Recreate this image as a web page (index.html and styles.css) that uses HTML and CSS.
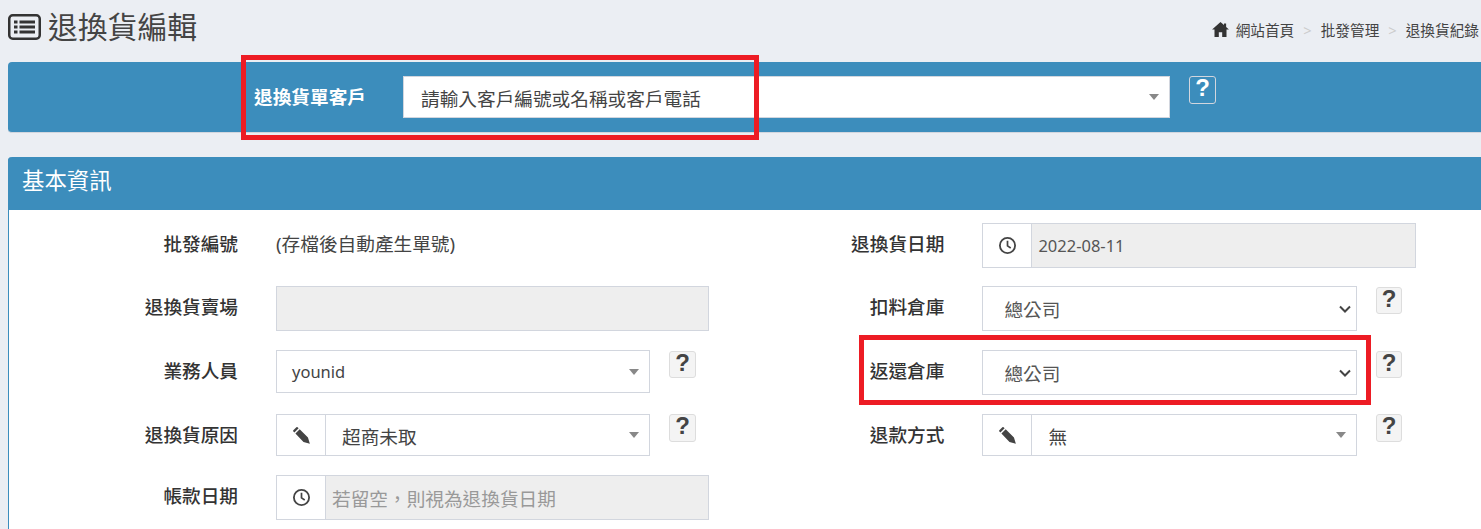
FILE: index.html
```html
<!DOCTYPE html>
<html lang="zh-Hant">
<head>
  <meta charset="UTF-8">
  <title>退換貨編輯</title>
  <link rel="stylesheet" href="styles.css">
</head>
<body>
  <svg class="icon-defs" width="0" height="0">
    <symbol id="ic-clock" viewBox="0 0 20 20">
      <circle cx="10" cy="10" r="8" fill="none" stroke="currentColor" stroke-width="1.9"/>
      <path d="M10 5v5.4l3.4 2.2" fill="none" stroke="currentColor" stroke-width="1.8"/>
    </symbol>
    <symbol id="ic-pencil" viewBox="0 0 20 20">
      <path d="M4.6 1.2 1.4 4.4a1 1 0 0 0 0 1.3l1.1 1.1 4.5-4.5-1.1-1.1a1 1 0 0 0-1.3 0zM3.6 7.9l4.5-4.5 8.7 8.7 2 6.7-6.7-2z" fill="currentColor"/>
    </symbol>
  </svg>

  <header class="page-head">
    <h1 class="page-title">
      <svg class="title-icon" viewBox="0 0 33 26">
        <rect x="1.250" y="1.250" width="30.500" height="23.500" rx="3.500" fill="none" stroke="currentColor" stroke-width="2.500"/>
        <path d="M6 6.500h3.500v3H6zM6 11.500h3.500v3H6zM6 16.500h3.500v3H6zM11.500 6.500H27v3H11.500zM11.500 11.500H27v3H11.500zM11.500 16.500H27v3H11.500z" fill="currentColor"/>
      </svg>
      退換貨編輯
    </h1>
    <nav class="crumbs">
      <svg class="home-icon" viewBox="0 0 18 16"><path d="M9 0 0 8h2.600v8h4.600v-5.200h3.600V16h4.600V8H18l-3-2.700V1.500h-2.300v1.700z" fill="currentColor"/></svg>
      <span class="crumb">網站首頁</span>
      <span class="crumb-sep">&gt;</span>
      <span class="crumb">批發管理</span>
      <span class="crumb-sep">&gt;</span>
      <span class="crumb">退換貨紀錄</span>
    </nav>
  </header>

  <section class="customer-bar">
    <label class="customer-label">退換貨單客戶</label>
    <div class="customer-select">
      <span>請輸入客戶編號或名稱或客戶電話</span>
      <i class="caret"></i>
    </div>
    <button class="help help-dark">?</button>
  </section>

  <section class="panel">
    <h2 class="panel-head">基本資訊</h2>
    <div class="form-grid">
      <div class="row">
        <label class="row-label">批發編號</label>
        <span class="static-text">(存檔後自動產生單號)</span>
      </div>
      <div class="row">
        <label class="row-label">退換貨日期</label>
        <div class="field field-wide field-tall">
          <span class="addon"><svg class="addon-icon"><use href="#ic-clock"/></svg></span>
          <span class="field-body body-latin is-disabled">2022-08-11</span>
        </div>
      </div>

      <div class="row">
        <label class="row-label">退換貨賣場</label>
        <div class="field field-wide field-tall is-disabled"></div>
      </div>
      <div class="row">
        <label class="row-label">扣料倉庫</label>
        <div class="field field-tall">
          <span class="field-body body-native">總公司</span>
          <svg class="chevron" viewBox="0 0 12 8"><path d="M1 1.500l5 5 5-5" fill="none" stroke="currentColor" stroke-width="2"/></svg>
        </div>
        <button class="help">?</button>
      </div>

      <div class="row">
        <label class="row-label">業務人員</label>
        <div class="field field-mid">
          <span class="field-body body-latin">younid</span>
          <i class="caret"></i>
        </div>
        <button class="help">?</button>
      </div>
      <div class="row">
        <label class="row-label">返還倉庫</label>
        <div class="field field-tall">
          <span class="field-body body-native">總公司</span>
          <svg class="chevron" viewBox="0 0 12 8"><path d="M1 1.500l5 5 5-5" fill="none" stroke="currentColor" stroke-width="2"/></svg>
        </div>
        <button class="help">?</button>
      </div>

      <div class="row">
        <label class="row-label">退換貨原因</label>
        <div class="field">
          <span class="addon"><svg class="addon-icon"><use href="#ic-pencil"/></svg></span>
          <span class="field-body">超商未取</span>
          <i class="caret"></i>
        </div>
        <button class="help help-tall">?</button>
      </div>
      <div class="row">
        <label class="row-label">退款方式</label>
        <div class="field">
          <span class="addon"><svg class="addon-icon"><use href="#ic-pencil"/></svg></span>
          <span class="field-body">無</span>
          <i class="caret"></i>
        </div>
        <button class="help help-tall">?</button>
      </div>

      <div class="row">
        <label class="row-label">帳款日期</label>
        <div class="field field-wide field-tall">
          <span class="addon"><svg class="addon-icon"><use href="#ic-clock"/></svg></span>
          <span class="field-body is-disabled placeholder">若留空，則視為退換貨日期</span>
        </div>
      </div>
    </div>
  </section>

  <!-- Red annotation boxes -->
  <div class="mark mark-customer"></div>
  <div class="mark mark-return"></div>
</body>
</html>
```

FILE: styles.css
```css
html, body {
  margin: 0;
  height: 529px;
  overflow: hidden;
}
body {
  position: relative;
  background-color: #ebeef3;
  color: #444;
  font-family: "Noto Sans", "Noto Sans CJK TC", sans-serif;
  font-size: 18.67px;
}
.icon-defs {
  position: absolute;
}
/* Page header */
.page-head {
  display: flex;
  justify-content: space-between;
  height: 62px;
  padding-left: 8px;
  box-sizing: border-box;
}
.page-title {
  display: flex;
  align-items: center;
  gap: 7px;
  height: 53px;
  margin: 0;
  font-size: 29.8px;
  font-weight: 400;
  line-height: 1;
  color: #444;
}
.title-icon {
  width: 33px;
  height: 26px;
  color: #333;
}
.crumbs {
  display: flex;
  align-items: center;
  height: 59px;
  margin-right: 2px;
  font-size: 14.67px;
  color: #444;
  white-space: nowrap;
}
.home-icon {
  width: 17px;
  height: 15px;
  margin-right: 7px;
  color: #333;
}
.crumb-sep {
  margin: 0 9px;
  color: #ccc;
}
/* Customer bar */
.customer-bar {
  display: flex;
  align-items: flex-start;
  height: 71px;
  margin-left: 8px;
  padding-top: 14px;
  box-sizing: border-box;
  background-color: #3c8dbc;
  border-radius: 4px 0 0 4px;
  border-bottom: 1px solid #d2d6de;
}
.customer-label {
  width: 149px;
  margin-left: 246px;
  color: #fff;
  font-size: 18.67px;
  font-weight: 700;
  line-height: 42px;
}
.customer-select {
  display: flex;
  align-items: center;
  justify-content: space-between;
  width: 767px;
  height: 42px;
  padding: 0 10px 0 17px;
  box-sizing: border-box;
  background: #fff;
  border: 1px solid #d2d6de;
}
.help {
  flex: none;
  width: 26.600px;
  height: 27px;
  margin: 1px 0 0 19px;
  padding: 0 0 4px;
  background: #f4f4f4;
  border: 1px solid #ddd;
  border-radius: 3px;
  color: #444;
  font-family: "Liberation Sans", sans-serif;
  font-size: 24px;
  font-weight: 700;
  line-height: 22px;
}
.help-tall {
  height: 28px;
  margin-top: 0;
}
.help-dark {
  width: 27px;
  height: 28px;
  margin-top: 0;
  background: #3c8dbc;
  border-color: #d2d6de;
  color: #fff;
}
.caret {
  flex: none;
  width: 0;
  height: 0;
  border-left: 5px solid transparent;
  border-right: 5px solid transparent;
  border-top: 6px solid #888;
}
/* Basic info panel */
.panel {
  height: 372px;
  margin: 24px 0 0 8px;
  background: #fff;
  border-left: 1px solid #3c8dbc;
  border-radius: 4px 0 0 0;
}
.panel-head {
  height: 53px;
  margin: 0 0 0 -1px;
  padding-left: 14px;
  background-color: #3c8dbc;
  border-radius: 4px 0 0 0;
  color: #fff;
  font-size: 22.4px;
  font-weight: 400;
  line-height: 48px;
}
.form-grid {
  display: grid;
  grid-template-columns: 706.400px 706.400px;
  grid-template-rows: 63px 64px 64px 61px 50px;
  padding-top: 13px;
}
.row {
  display: flex;
  align-items: flex-start;
}
.row-label {
  flex: none;
  width: 229px;
  margin-right: 38px;
  font-weight: 500;
  line-height: 42px;
  text-align: right;
  color: #333;
}
.static-text {
  line-height: 42px;
}
.field {
  display: flex;
  flex: none;
  align-items: center;
  width: 374.400px;
  height: 42px;
  box-sizing: border-box;
  background: #fff;
  border: 1px solid #d2d6de;
}
.field-mid {
  height: 43px;
}
.field-tall {
  height: 45px;
}
.field-wide {
  width: 433.400px;
}
.field > .caret {
  margin-right: 10px;
}
.chevron {
  flex: none;
  width: 12px;
  height: 8px;
  margin-right: 5px;
  color: #444;
}
.addon {
  display: flex;
  flex: none;
  align-items: center;
  justify-content: center;
  width: 48px;
  height: 100%;
  border-right: 1px solid #d2d6de;
}
.addon-icon {
  width: 19px;
  height: 19px;
  color: #444;
}
.field-body {
  display: flex;
  flex: 1;
  align-items: center;
  height: 100%;
  padding-left: 16px;
}
.body-latin {
  padding-left: 15px;
  font-size: 16.500px;
}
.body-native {
  padding-left: 21px;
  color: #555;
}
.is-disabled {
  background-color: #eee;
}
.field-body.is-disabled {
  padding-left: 6px;
  color: #555;
}
.field-body.placeholder {
  color: #999;
}
/* Annotation boxes */
.mark {
  position: absolute;
  box-sizing: border-box;
  border: 5px solid #ed1c24;
}
.mark-customer {
  left: 241px;
  top: 55px;
  width: 518px;
  height: 85px;
}
.mark-return {
  left: 859px;
  top: 335px;
  width: 512px;
  height: 70px;
}
```
